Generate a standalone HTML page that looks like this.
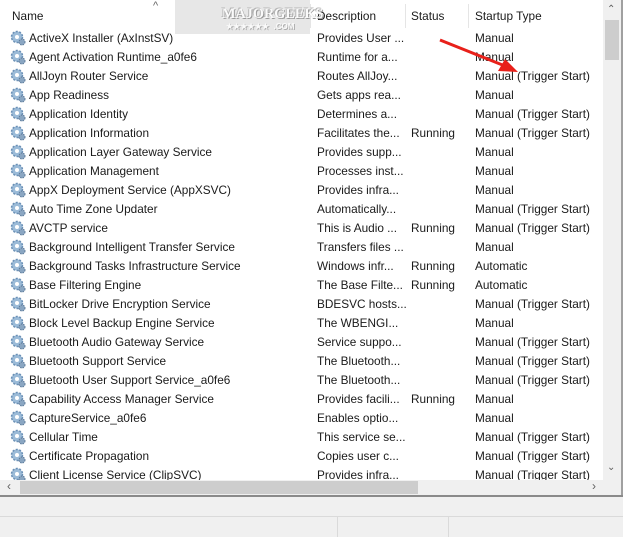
<!DOCTYPE html>
<html><head><style>
body{margin:0;width:623px;height:537px;background:#fff;font-family:"Liberation Sans",sans-serif;font-size:11.8px;color:#1a1a1a;position:relative;overflow:hidden}
.a{position:absolute;white-space:nowrap}
.hd{position:absolute;top:9px}
.sep{position:absolute;top:4px;width:1px;height:24px;background:#e5e5e5}
.row{position:absolute;left:0;width:603px;height:19px}
.row span{position:absolute;top:3px;white-space:nowrap}
.ic{position:absolute;left:10px;top:2px;width:16px;height:16px}
</style></head><body>
<div class="hd" style="left:12px">Name</div>
<div class="a" style="left:153px;top:0;font-size:11px;color:#666">^</div>
<div class="sep" style="left:310px"></div>
<div class="hd" style="left:317px">Description</div>
<div class="sep" style="left:405px"></div>
<div class="hd" style="left:411px">Status</div>
<div class="sep" style="left:468px"></div>
<div class="hd" style="left:475px">Startup Type</div>
<div class="a" style="left:175px;top:0;width:135px;height:34px;background:#e6e6e6;opacity:.95"></div>
<div class="a" style="left:222px;top:6px;width:86px;font-family:'Liberation Serif',serif;font-weight:bold;font-size:15px;color:#fafafa;text-shadow:1px 1px 0 #9a9a9a,-1px -1px 0 #b5b5b5;transform:scaleX(0.95);transform-origin:left">MAJORGEEKS</div>
<div class="a" style="left:226px;top:22px;font-size:8px;color:#fafafa;font-weight:bold;text-shadow:1px 1px 0 #aaa">★★★★★★&nbsp;&nbsp;.COM</div>
<div id="rows"></div>
<script>
var d=[["ActiveX Installer (AxInstSV)","Provides User ...","","Manual"],
["Agent Activation Runtime_a0fe6","Runtime for a...","","Manual"],
["AllJoyn Router Service","Routes AllJoy...","","Manual (Trigger Start)"],
["App Readiness","Gets apps rea...","","Manual"],
["Application Identity","Determines a...","","Manual (Trigger Start)"],
["Application Information","Facilitates the...","Running","Manual (Trigger Start)"],
["Application Layer Gateway Service","Provides supp...","","Manual"],
["Application Management","Processes inst...","","Manual"],
["AppX Deployment Service (AppXSVC)","Provides infra...","","Manual"],
["Auto Time Zone Updater","Automatically...","","Manual (Trigger Start)"],
["AVCTP service","This is Audio ...","Running","Manual (Trigger Start)"],
["Background Intelligent Transfer Service","Transfers files ...","","Manual"],
["Background Tasks Infrastructure Service","Windows infr...","Running","Automatic"],
["Base Filtering Engine","The Base Filte...","Running","Automatic"],
["BitLocker Drive Encryption Service","BDESVC hosts...","","Manual (Trigger Start)"],
["Block Level Backup Engine Service","The WBENGI...","","Manual"],
["Bluetooth Audio Gateway Service","Service suppo...","","Manual (Trigger Start)"],
["Bluetooth Support Service","The Bluetooth...","","Manual (Trigger Start)"],
["Bluetooth User Support Service_a0fe6","The Bluetooth...","","Manual (Trigger Start)"],
["Capability Access Manager Service","Provides facili...","Running","Manual"],
["CaptureService_a0fe6","Enables optio...","","Manual"],
["Cellular Time","This service se...","","Manual (Trigger Start)"],
["Certificate Propagation","Copies user c...","","Manual (Trigger Start)"],
["Client License Service (ClipSVC)","Provides infra...","","Manual (Trigger Start)"]];
var ic='<svg class="ic" viewBox="0 0 16 16"><circle cx="7" cy="7" r="5.5" fill="#9bbbd8" stroke="#6a8fb5" stroke-width="1.5" stroke-dasharray="2 1.5"/><circle cx="7" cy="7" r="2" fill="#fff"/><circle cx="12" cy="12" r="3" fill="#8aa6c2" stroke="#5d7a99" stroke-width="1" stroke-dasharray="1.5 1"/></svg>';
var h='';d.forEach(function(r,i){h+='<div class="row" style="top:'+(28+19*i)+'px">'+ic+'<span style="left:29px">'+r[0]+'</span><span style="left:317px">'+r[1]+'</span><span style="left:411px">'+r[2]+'</span><span style="left:475px">'+r[3]+'</span></div>'});
document.getElementById('rows').innerHTML=h;
</script>
<svg class="a" style="left:0;top:0" width="623" height="537">
<line x1="440" y1="40" x2="505" y2="66" stroke="#e8201a" stroke-width="3"/>
<polygon points="518,72 498,71 505,59" fill="#e8201a"/>
</svg>
<div class="a" style="left:603px;top:0;width:18px;height:480px;background:#f0f0f0"></div>
<div class="a" style="left:605px;top:20px;width:14px;height:40px;background:#cdcdcd"></div>
<div class="a" style="left:607px;top:4px;font-size:10px;color:#606060">&#8963;</div>
<div class="a" style="left:607px;top:462px;font-size:10px;color:#606060">&#8964;</div>
<div class="a" style="left:0;top:480px;width:603px;height:15px;background:#f0f0f0"></div>
<div class="a" style="left:20px;top:481px;width:398px;height:13px;background:#cdcdcd"></div>
<div class="a" style="left:7px;top:479px;font-size:12px;color:#606060">&#8249;</div>
<div class="a" style="left:592px;top:479px;font-size:12px;color:#606060">&#8250;</div>
<div class="a" style="left:603px;top:480px;width:18px;height:15px;background:#f0f0f0"></div>
<div class="a" style="left:621px;top:0;width:2px;height:497px;background:#a0a0a0"></div>
<div class="a" style="left:0;top:495px;width:623px;height:2px;background:#8a8a8a"></div>
<div class="a" style="left:0;top:497px;width:623px;height:40px;background:#f0f0f0"></div>
<div class="a" style="left:0;top:516px;width:623px;height:1px;background:#dadada"></div>
<div class="a" style="left:337px;top:517px;width:1px;height:20px;background:#dadada"></div>
<div class="a" style="left:448px;top:517px;width:1px;height:20px;background:#dadada"></div>
</body></html>
